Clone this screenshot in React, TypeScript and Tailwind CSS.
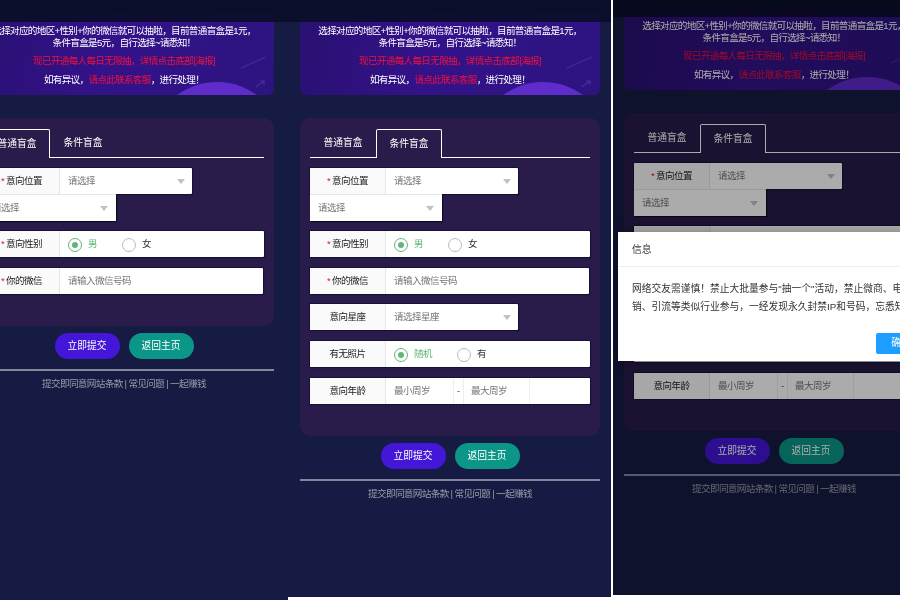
import React from "react";

const FONT = '"Liberation Sans", "Noto Sans CJK SC", sans-serif';

function Caret() {
  return <span className="w-0 h-0 border-x-[4px] border-x-transparent border-t-[5px] border-t-[#c2c2c2]" />;
}

function Label({ text, required }: { text: string; required?: boolean }) {
  return (
    <div className="w-[76px] shrink-0 h-full pt-[1px] bg-[#fafafa] border-r border-[#e6e6e6] flex items-center justify-center text-[#222] text-[9.5px] tracking-[-0.5px]">
      {required && <span className="text-[#e02020] mr-[2px]">*</span>}
      {text}
    </div>
  );
}

function Row({ w, children, className }: { w: string; children: React.ReactNode; className?: string }) {
  return (
    <div className={`${w} h-[26px] bg-white flex items-center rounded-[1px] shadow-[0_0_0_1px_#15123a,1px_1px_1px_#0b0a20] ${className ?? ""}`}>
      {children}
    </div>
  );
}

function Radio({ text, on, w }: { text: string; on?: boolean; w: string }) {
  return (
    <div className={`flex items-center gap-[6px] pt-[1px] ${w}`}>
      <span className={`w-[14px] h-[14px] rounded-full border flex items-center justify-center ${on ? "border-[#5fb878]" : "border-[#bbb]"}`}>
        {on && <span className="w-[6px] h-[6px] rounded-full bg-[#5fb878]" />}
      </span>
      <span className={`text-[9.5px] tracking-[-0.5px] ${on ? "text-[#5fb878]" : "text-[#333]"}`}>{text}</span>
    </div>
  );
}

function Form({ full }: { full: boolean }) {
  return (
    <div className="flex flex-col">
      <Row w="w-[208px]">
        <Label text="意向位置" required />
        <div className="flex-1 flex items-center justify-between pt-[1px] pl-[8px] pr-[7px] text-[#757575] text-[9.5px] tracking-[-0.5px]">
          <span>请选择</span>
          <Caret />
        </div>
      </Row>
      <div className="w-[132px] h-[27px] bg-white flex items-center justify-between pl-[8px] pr-[8px] text-[#757575] text-[9.5px] tracking-[-0.5px] border-t border-[#e6e6e6] shadow-[1px_1px_1px_#0b0a20]">
        <span>请选择</span>
        <Caret />
      </div>
      <Row w="w-[280px]" className="mt-[10px]">
        <Label text="意向性别" required />
        <div className="flex items-center pl-[8px]">
          <Radio text="男" on w="w-[54px]" />
          <Radio text="女" w="w-[54px]" />
        </div>
      </Row>
      <Row w="w-[279px]" className="mt-[11px]">
        <Label text="你的微信" required />
        <span className="pl-[8px] pt-[1px] text-[#757575] text-[9.5px] tracking-[-0.5px]">请输入微信号码</span>
      </Row>
      {full && (
        <>
          <Row w="w-[208px]" className="mt-[10px]">
            <Label text="意向星座" />
            <div className="flex-1 flex items-center justify-between pt-[1px] pl-[8px] pr-[7px] text-[#757575] text-[9.5px] tracking-[-0.5px]">
              <span>请选择星座</span>
              <Caret />
            </div>
          </Row>
          <Row w="w-[280px]" className="mt-[11px]">
            <Label text="有无照片" />
            <div className="flex items-center pl-[8px]">
              <Radio text="随机" on w="w-[63px]" />
              <Radio text="有" w="w-[54px]" />
            </div>
          </Row>
          <Row w="w-[280px]" className="mt-[11px]">
            <Label text="意向年龄" />
            <div className="w-[68px] h-full pt-[1px] border-r border-[#eee] flex items-center pl-[8px] text-[#757575] text-[9.5px] tracking-[-0.5px]">最小周岁</div>
            <div className="w-[9px] text-center text-[#555] text-[9.5px]">-</div>
            <div className="w-[67px] h-full pt-[1px] border-x border-[#eee] flex items-center pl-[7px] text-[#757575] text-[9.5px] tracking-[-0.5px]">最大周岁</div>
          </Row>
        </>
      )}
    </div>
  );
}

function Content({ active, full }: { active: 0 | 1; full: boolean }) {
  return (
    <div className="w-[302px] shrink-0">
      <div className="relative w-[300px] mx-[1px] h-[82px] rounded-[6px] overflow-hidden bg-[linear-gradient(100deg,#291072_0%,#34128a_45%,#2c1480_100%)] text-center text-[9.6px] tracking-[-0.7px] leading-[12px] text-white">
        <div className="absolute left-[175px] top-[69px] w-[136px] h-[136px] rounded-full bg-[#5f2bcb]" />
        <svg className="absolute left-[260px] top-[40px]" width="40" height="42" viewBox="0 0 40 42" fill="none">
          <path d="M7 15 L32 4" stroke="#6a4bc0" strokeOpacity="0.3" strokeWidth="1.5" />
          <path d="M22 34 L30 28 M26 28 L30 28 L30 32" stroke="#8a6bd8" strokeOpacity="0.3" strokeWidth="1.2" />
        </svg>
        <div className="relative pt-[12px]">
          <p>选择对应的地区+性别+你的微信就可以抽啦，目前普通盲盒是1元，</p>
          <p>条件盲盒是5元，自行选择~请悉知！</p>
          <p className="mt-[6px] text-[#f0103c]">现已开通每人每日无限抽，详情点击底部[海报]</p>
          <p className="mt-[7px]">
            如有异议，<span className="text-[#f0103c]">请点此联系客服</span>，进行处理！
          </p>
        </div>
      </div>
      <div className="w-[300px] mx-[1px] mt-[23px] rounded-[10px] bg-[#291c4a] px-[10px] pt-[11px] pb-[32px]">
        <div className="flex h-[29px] border-b border-white text-white text-[9.75px]">
          <div className={`w-[66px] h-[29px] flex items-center justify-center rounded-t-[2px] ${active === 0 ? "border border-b-0 border-white bg-[#291c4a]" : ""}`}>普通盲盒</div>
          <div className={`w-[66px] h-[29px] flex items-center justify-center rounded-t-[2px] ${active === 1 ? "border border-b-0 border-white bg-[#291c4a]" : ""}`}>条件盲盒</div>
        </div>
        <div className="mt-[10px]">
          <Form full={full} />
        </div>
      </div>
      <div className="flex justify-center gap-[9px] mt-[7px] text-white text-[9.75px]">
        <div className="w-[65px] h-[26px] rounded-full bg-[#4316d8] flex items-center justify-center">立即提交</div>
        <div className="w-[65px] h-[26px] rounded-full bg-[#0b9688] flex items-center justify-center">返回主页</div>
      </div>
      <div className="mt-[10px] h-[2px] mx-[1px] bg-[#85869c]" />
      <p className="mt-[7px] text-center text-[9.6px] tracking-[-0.65px] leading-[12px] text-[#9a9aa8]">提交即同意网站条款 | 常见问题 | 一起赚钱</p>
    </div>
  );
}

function TopBar({ h }: { h: string }) {
  return <div className={`absolute left-0 right-0 top-0 ${h} bg-[#0a0d28]/90`} />;
}

export default function App() {
  return (
    <div className="flex w-[900px] h-[600px] overflow-hidden bg-white blur-[0.3px]" style={{ fontFamily: FONT }}>
      <div className="relative w-[288px] h-[600px] overflow-hidden bg-[#151b42] flex pt-[13px]">
        <div className="ml-[-27px]">
          <Content active={0} full={false} />
        </div>
        <TopBar h="h-[22px]" />
      </div>
      <div className="relative w-[323px] h-[597px] overflow-hidden bg-[#151b42] flex pt-[13px]">
        <div className="ml-[11px]">
          <Content active={1} full />
        </div>
        <TopBar h="h-[22px]" />
      </div>
      <div className="w-[2px] shrink-0 bg-white" />
      <div className="relative w-[287px] h-[595px] overflow-hidden bg-[#151b42] flex pt-[8px]">
        <div className="ml-[10px]">
          <Content active={1} full />
        </div>
        <TopBar h="h-[17px]" />
        <div className="absolute inset-0 bg-black/[.33]" />
        <div className="absolute left-[5px] top-[232px] w-[330px] h-[129px] bg-white shadow-[1px_1px_10px_rgba(0,0,0,0.3)] text-[#333] text-[9.75px]">
          <div className="h-[35px] flex items-center pl-[14px] pt-[3px] border-b border-[#eee]">信息</div>
          <div className="px-[14px] pt-[13px] leading-[18px] whitespace-nowrap">
            <p>网络交友需谨慎！禁止大批量参与"抽一个"活动，禁止微商、电</p>
            <p>销、引流等类似行业参与，一经发现永久封禁IP和号码，忘悉知</p>
          </div>
          <div className="absolute left-[258px] top-[101px] w-[50px] h-[21px] rounded-[2px] bg-[#1e9fff] text-white flex items-center justify-center">确定</div>
        </div>
      </div>
    </div>
  );
}
